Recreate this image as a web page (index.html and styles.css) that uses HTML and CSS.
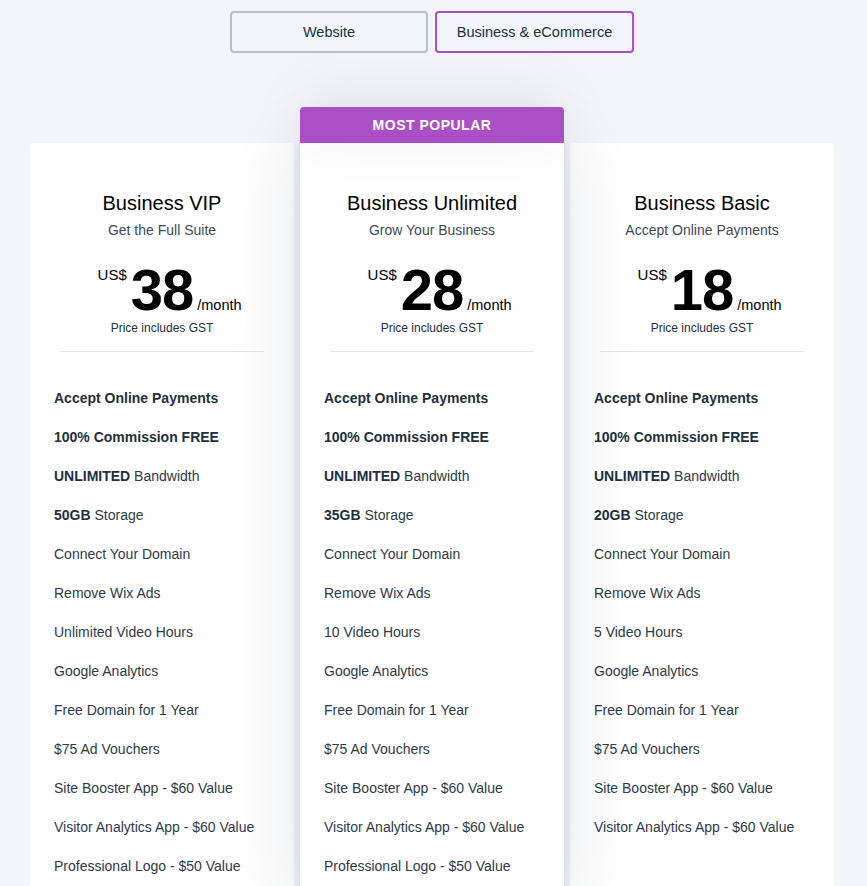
FILE: index.html
```html
<!DOCTYPE html>
<html>
<head>
    <title>Plans - Business &amp; eCommerce</title>
    <meta charset="UTF-8">
    <link rel="stylesheet" href="styles.css">
</head>
<body>
    <div class="page">
        <div class="tabs">
            <button class="tab">Website</button>
            <button class="tab active">Business &amp; eCommerce</button>
        </div>

        <div class="plans">
            <div class="plan">
                <div class="plan-head">
                    <h2>Business VIP</h2>
                    <p class="tagline">Get the Full Suite</p>
                    <div class="price">
                        <span class="cur">US$</span>
                        <span class="amount">38</span>
                        <span class="per">/month</span>
                    </div>
                    <p class="tax">Price includes GST</p>
                </div>
                <ul class="features">
                    <li><b>Accept Online Payments</b></li>
                    <li><b>100% Commission FREE</b></li>
                    <li><b>UNLIMITED</b> Bandwidth</li>
                    <li><b>50GB</b> Storage</li>
                    <li>Connect Your Domain</li>
                    <li>Remove Wix Ads</li>
                    <li>Unlimited Video Hours</li>
                    <li>Google Analytics</li>
                    <li>Free Domain for 1 Year</li>
                    <li>$75 Ad Vouchers</li>
                    <li>Site Booster App - $60 Value</li>
                    <li>Visitor Analytics App - $60 Value</li>
                    <li>Professional Logo - $50 Value</li>
                </ul>
            </div>

            <div class="plan popular">
                <div class="badge">MOST POPULAR</div>
                <div class="plan-head">
                    <h2>Business Unlimited</h2>
                    <p class="tagline">Grow Your Business</p>
                    <div class="price">
                        <span class="cur">US$</span>
                        <span class="amount">28</span>
                        <span class="per">/month</span>
                    </div>
                    <p class="tax">Price includes GST</p>
                </div>
                <ul class="features">
                    <li><b>Accept Online Payments</b></li>
                    <li><b>100% Commission FREE</b></li>
                    <li><b>UNLIMITED</b> Bandwidth</li>
                    <li><b>35GB</b> Storage</li>
                    <li>Connect Your Domain</li>
                    <li>Remove Wix Ads</li>
                    <li>10 Video Hours</li>
                    <li>Google Analytics</li>
                    <li>Free Domain for 1 Year</li>
                    <li>$75 Ad Vouchers</li>
                    <li>Site Booster App - $60 Value</li>
                    <li>Visitor Analytics App - $60 Value</li>
                    <li>Professional Logo - $50 Value</li>
                </ul>
            </div>

            <div class="plan">
                <div class="plan-head">
                    <h2>Business Basic</h2>
                    <p class="tagline">Accept Online Payments</p>
                    <div class="price">
                        <span class="cur">US$</span>
                        <span class="amount">18</span>
                        <span class="per">/month</span>
                    </div>
                    <p class="tax">Price includes GST</p>
                </div>
                <ul class="features">
                    <li><b>Accept Online Payments</b></li>
                    <li><b>100% Commission FREE</b></li>
                    <li><b>UNLIMITED</b> Bandwidth</li>
                    <li><b>20GB</b> Storage</li>
                    <li>Connect Your Domain</li>
                    <li>Remove Wix Ads</li>
                    <li>5 Video Hours</li>
                    <li>Google Analytics</li>
                    <li>Free Domain for 1 Year</li>
                    <li>$75 Ad Vouchers</li>
                    <li>Site Booster App - $60 Value</li>
                    <li>Visitor Analytics App - $60 Value</li>
                </ul>
            </div>
        </div>
    </div>
</body>
</html>
```

FILE: styles.css
```css
body {
    margin: 0;
    background-color: #f2f5f9;
    font-family: "Liberation Sans", Arial, sans-serif;
    color: #20303c;
    overflow: hidden;
}
.page { width: 867px; height: 886px; }

.tabs {
    display: flex;
    gap: 7px;
    padding-top: 11px;
    padding-left: 230px;
}
.tab {
    width: 198px;
    height: 42px;
    background: #f2f5f9;
    border: 2px solid #b6c1cd;
    border-radius: 4px;
    font-family: "Liberation Sans", Arial, sans-serif;
    font-size: 14.5px;
    color: #20303c;
}
.tab.active { width: 199px; border-color: #ab4fc6; }

.plans {
    display: flex;
    gap: 6px;
    margin-top: 90px;
    padding-left: 30px;
}
.plan {
    width: 264px;
    background: #fff;
    border-radius: 4px;
    position: relative;
}
.plan.popular {
    z-index: 1;
    border-radius: 0 0 4px 4px;
    box-shadow: 0 0 70px rgba(30, 50, 70, 0.14), 0 0 12px rgba(30, 50, 70, 0.08);
}
.badge {
    position: absolute;
    top: -36px;
    left: 0;
    right: 0;
    height: 36px;
    line-height: 36px;
    background: #ab4fc6;
    color: #fff;
    text-align: center;
    font-size: 14px;
    font-weight: bold;
    letter-spacing: 0.5px;
    border-radius: 4px 4px 0 0;
    box-shadow: 0 -10px 60px rgba(30, 50, 70, 0.08);
}

.plan-head {
    margin: 0 30px;
    padding-top: 48px;
    padding-bottom: 16px;
    border-bottom: 1px solid #dfe5eb;
    text-align: center;
}
.plan-head h2 {
    margin: 0;
    font-size: 20px;
    font-weight: normal;
    line-height: 24px;
    color: #000;
}
.tagline {
    margin: 7px 0 0;
    font-size: 14px;
    line-height: 16px;
    color: #3b4a57;
}
/* number stays centred, currency and period hang off its sides */
.price {
    display: grid;
    grid-template-columns: 1fr auto 1fr;
    align-items: baseline;
    margin-top: 23px;
    line-height: 1;
    color: #000;
}
.cur {
    justify-self: end;
    align-self: start;
    font-size: 15px;
    margin-top: 6px;
    margin-right: 4px;
}
.amount {
    font-size: 58px;
    font-weight: bold;
    letter-spacing: -1px;
}
.per {
    justify-self: start;
    font-size: 14.5px;
    margin-left: 4px;
}
.tax {
    margin: 2px 0 0;
    font-size: 12px;
    line-height: 14px;
    color: #20303c;
}

.features {
    list-style: none;
    margin: 0;
    padding: 38px 24px 0;
}
.features li {
    font-size: 14px;
    line-height: 16px;
    margin-bottom: 23px;
    color: #2b3a47;
}
.features b { font-weight: bold; color: #20303c; }
```
